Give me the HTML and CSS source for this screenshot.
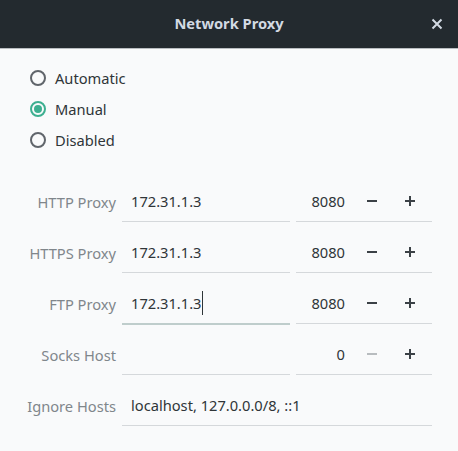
FILE: index.html
```html
<!DOCTYPE html>
<html>
<head>
<meta charset="utf-8">
<link rel="stylesheet" href="styles.css">
</head>
<body>
<div class="window">
  <header class="titlebar">
    <div class="title">Network Proxy</div>
    <button class="close" aria-label="Close">
      <svg width="12" height="12" viewBox="0 0 12 12"><path d="M1.5 1.5 L10.5 10.5 M10.5 1.5 L1.5 10.5" stroke="#d3dae3" stroke-width="2" fill="none"/></svg>
    </button>
  </header>
  <main class="content">
    <div class="radios">
      <label class="radio"><span class="dot"></span><span>Automatic</span></label>
      <label class="radio checked"><span class="dot"></span><span>Manual</span></label>
      <label class="radio"><span class="dot"></span><span>Disabled</span></label>
    </div>
    <div class="grid">
      <div class="label">HTTP Proxy</div>
      <div class="entry">172.31.1.3</div>
      <div class="spin"><span class="num">8080</span><span class="btn minus"></span><span class="btn plus"></span></div>

      <div class="label">HTTPS Proxy</div>
      <div class="entry">172.31.1.3</div>
      <div class="spin"><span class="num">8080</span><span class="btn minus"></span><span class="btn plus"></span></div>

      <div class="label">FTP Proxy</div>
      <div class="entry focused">172.31.1.3<span class="caret"></span></div>
      <div class="spin"><span class="num">8080</span><span class="btn minus"></span><span class="btn plus"></span></div>

      <div class="label">Socks Host</div>
      <div class="entry"></div>
      <div class="spin"><span class="num">0</span><span class="btn minus disabled"></span><span class="btn plus"></span></div>

      <div class="label">Ignore Hosts</div>
      <div class="entry wide">localhost, 127.0.0.0/8, ::1</div>
    </div>
  </main>
</div>
</body>
</html>
```
FILE: styles.css
```css
* { box-sizing: border-box; }
html, body { margin: 0; padding: 0; }
body {
  background: #f9fafb;
  font-family: "Noto Sans", "DejaVu Sans", sans-serif;
  font-size: 14.67px;
  color: #2f3538;
  width: 458px;
  height: 451px;
  overflow: hidden;
}
.titlebar {
  height: 49px;
  background: #232a2f;
  border-bottom: 1px solid #b9bdc1;
  display: flex;
  align-items: center;
  justify-content: center;
  position: relative;
}
.title {
  color: #d3dae3;
  font-weight: bold;
  font-size: 14.67px;
  margin-top: -2px;
}
.close {
  position: absolute;
  right: 14px;
  top: 17px;
  width: 14px;
  height: 14px;
  padding: 0;
  border: 0;
  background: transparent;
  display: flex;
  align-items: center;
  justify-content: center;
}
.content {
  padding: 13px 0 0 0;
}
.radios {
  display: flex;
  flex-direction: column;
  padding-left: 30px;
}
.radio {
  height: 31px;
  display: flex;
  align-items: center;
  gap: 9px;
  color: #2f3538;
}
.dot {
  width: 16px;
  height: 16px;
  border-radius: 50%;
  border: 2px solid #60656b;
  display: flex;
  align-items: center;
  justify-content: center;
}
.radio.checked .dot {
  border-color: #3daf90;
}
.radio.checked .dot::after {
  content: "";
  width: 8px;
  height: 8px;
  border-radius: 50%;
  background: #3daf90;
}
.grid {
  margin-top: 26px;
  display: grid;
  grid-template-columns: 116px 168px 136px;
  column-gap: 6px;
  row-gap: 10px;
  grid-auto-rows: 41px;
}
.label {
  text-align: right;
  color: #80868b;
  display: flex;
  align-items: center;
  justify-content: flex-end;
}
.entry {
  border-bottom: 1px solid #d5d8db;
  display: flex;
  align-items: center;
  padding-left: 9px;
  position: relative;
}
.entry.wide {
  grid-column: 2 / 4;
}
.entry.focused {
  border-bottom-color: #bfcdcc;
  box-shadow: 0 1px 0 #bfcdcc;
}
.caret {
  display: inline-block;
  width: 1px;
  height: 24px;
  background: #2f3538;
  margin-left: 1px;
}
.spin {
  border-bottom: 1px solid #d5d8db;
  display: flex;
  align-items: center;
  padding-right: 3px;
}
.num {
  flex: 1;
  text-align: right;
  padding-right: 8px;
}
.btn {
  width: 38px;
  height: 100%;
  position: relative;
}
.btn::before, .btn::after {
  content: "";
  position: absolute;
  background: #3b4146;
}
.btn::before {
  width: 10px;
  height: 2px;
  left: 14px;
  top: 19px;
}
.plus::after {
  width: 2px;
  height: 10px;
  left: 18px;
  top: 15px;
}
.minus::after { display: none; }
.btn.disabled::before { background: #b8bcbf; }
```
